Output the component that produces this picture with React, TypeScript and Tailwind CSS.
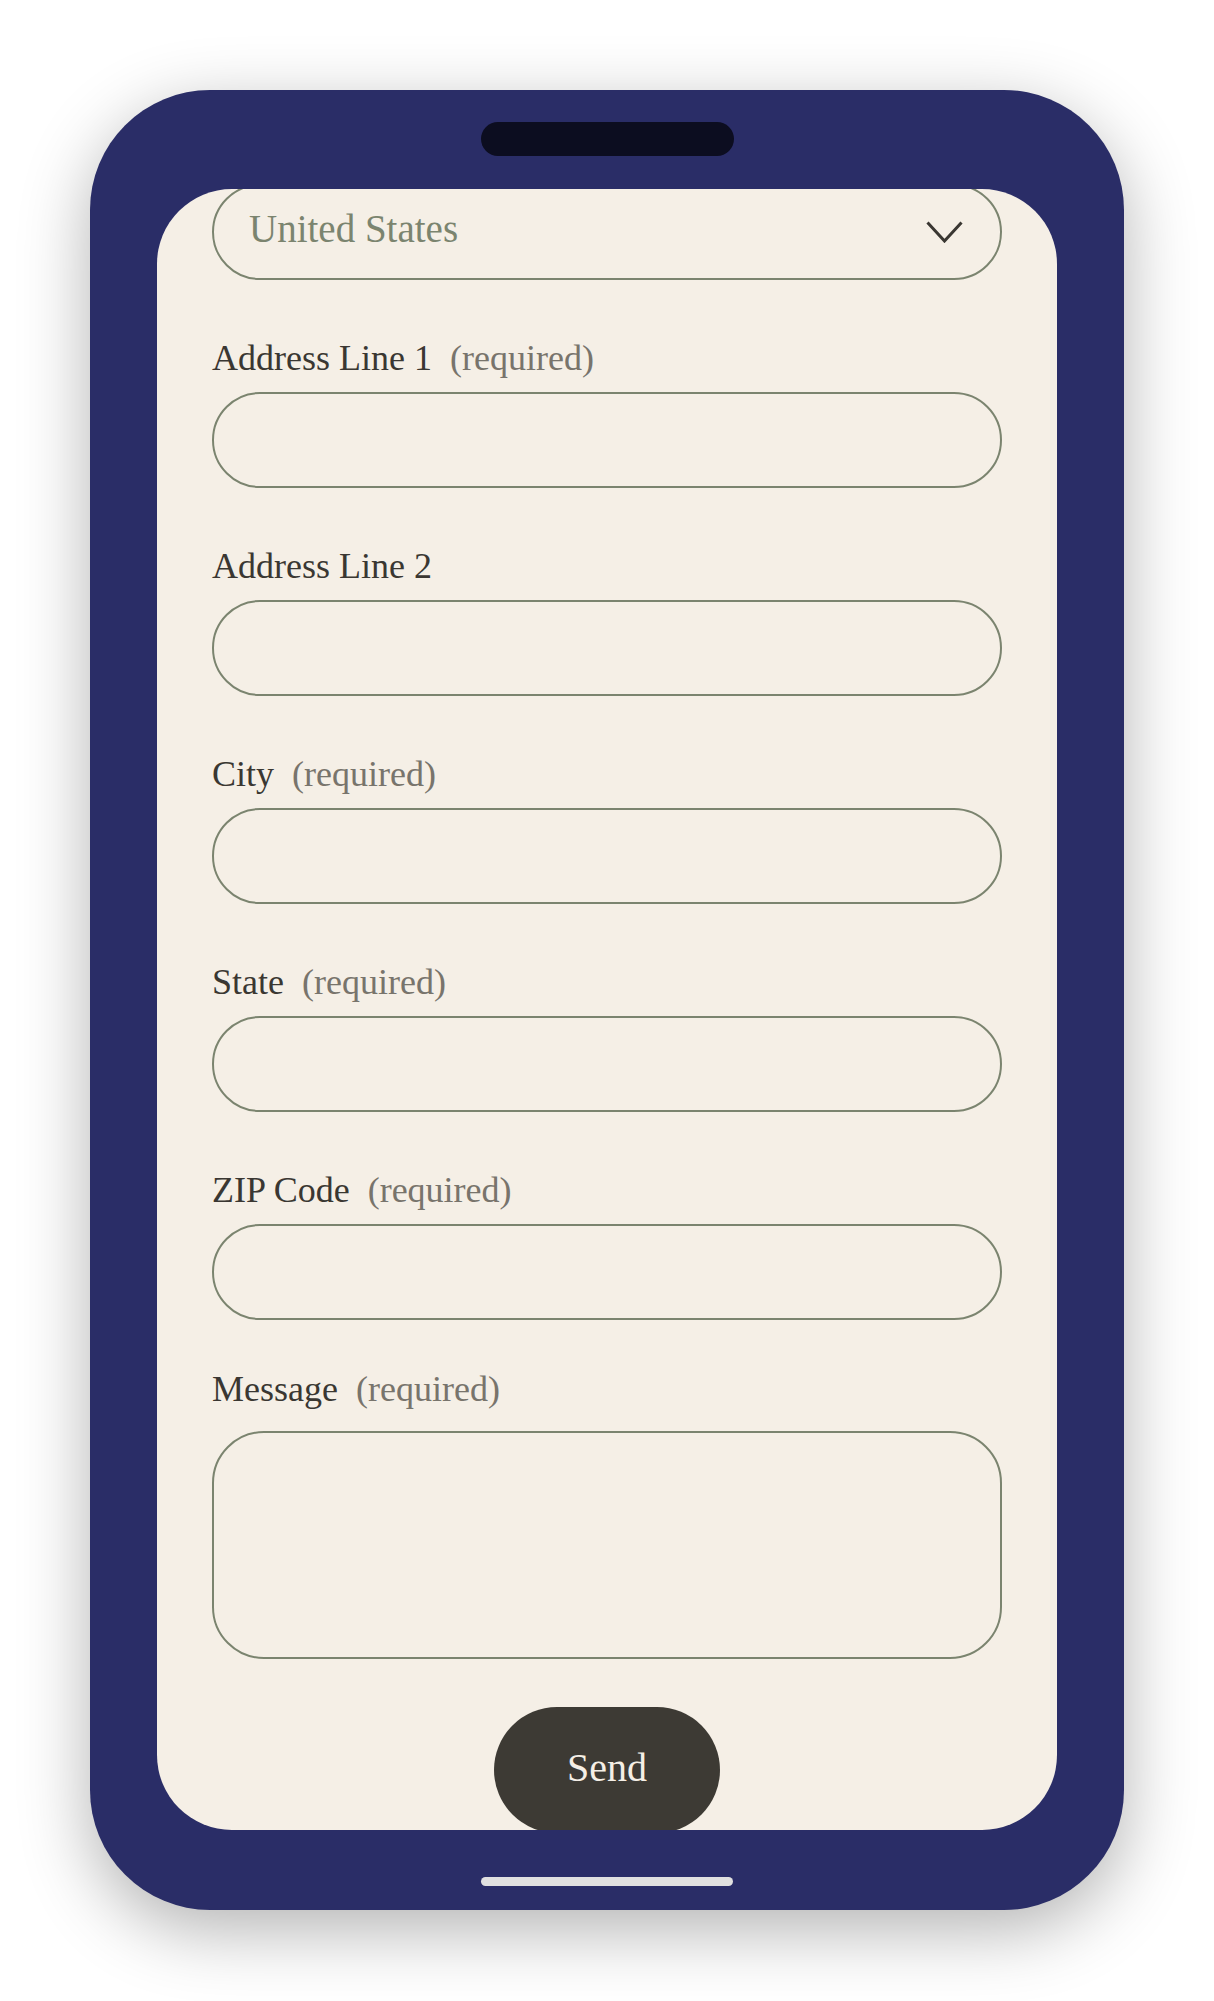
import React from 'react';

const serif = "font-['Liberation_Serif','Times_New_Roman',serif]";

type FieldProps = {
  label: string;
  required?: boolean;
};

const Label: React.FC<FieldProps & { className?: string }> = ({ label, required, className }) => (
  <div className={`text-[36px] leading-none text-[#3a3732] whitespace-nowrap ${className ?? ''}`}>
    {label}
    {required && <span className="ml-[18px] text-[#78746c]">(required)</span>}
  </div>
);

const TextField: React.FC<FieldProps> = ({ label, required }) => (
  <div className="mt-[60px]">
    <Label label={label} required={required} />
    <input
      type="text"
      className="mt-[16px] block h-[96px] w-full rounded-full border-2 border-[#7b846f] bg-transparent px-[38px] text-[36px] text-[#3a3732] outline-none"
    />
  </div>
);

const CountrySelect: React.FC = () => (
  <div className="flex h-[96px] w-full items-center justify-between rounded-full border-2 border-[#7b846f] pl-[35px] pr-[37px]">
    <span className="pb-[7px] text-[39px] leading-none text-[#7b846f]">United States</span>
    <svg width="37" height="22" viewBox="0 0 37 22" fill="none">
      <path d="M1.5 1.5 L18.5 20 L35.5 1.5" stroke="#3a3732" strokeWidth="3" />
    </svg>
  </div>
);

export default function App() {
  return (
    <div className={`min-h-[2001px] bg-white p-[90px] ${serif}`}>
      <div className="mx-auto flex h-[1820px] w-[1034px] flex-col items-center rounded-[120px] bg-[#2a2d67] px-[67px] pt-[32px] pb-[24px] shadow-[0_20px_70px_rgba(0,0,0,0.3)]">
        {/* speaker notch */}
        <div className="h-[34px] w-[253px] rounded-full bg-[#0c0d20]" />

        {/* screen */}
        <div className="mt-[33px] h-[1641px] w-full overflow-hidden rounded-[75px] bg-[#f5efe6]">
          <form className="-mt-[5px] px-[55px]" onSubmit={(e) => e.preventDefault()}>
            <CountrySelect />
            <TextField label="Address Line 1" required />
            <TextField label="Address Line 2" />
            <TextField label="City" required />
            <TextField label="State" required />
            <TextField label="ZIP Code" required />

            <div className="mt-[51px]">
              <Label label="Message" required />
              <textarea className="mt-[24px] block h-[228px] w-full resize-none rounded-[52px] border-2 border-[#7b846f] bg-transparent px-[38px] py-[30px] text-[36px] text-[#3a3732] outline-none" />
            </div>

            <div className="mt-[48px] flex justify-center">
              <button
                type="submit"
                className="flex h-[126px] w-[226px] items-center justify-center rounded-full bg-[#3d3a34] pb-[4px] text-[40px] leading-none text-[#f5efe6]"
              >
                Send
              </button>
            </div>
          </form>
        </div>

        {/* home indicator */}
        <div className="mt-[47px] h-[9px] w-[252px] rounded-full bg-[#e0e0e0]" />
      </div>
    </div>
  );
}
